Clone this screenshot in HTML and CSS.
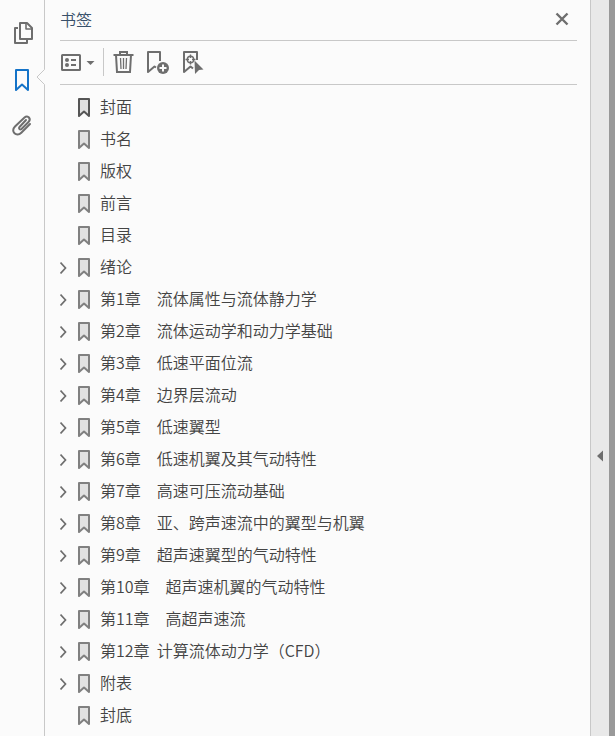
FILE: index.html
```html
<!DOCTYPE html>
<html lang="zh-CN">
<head>
    <meta charset="UTF-8">
    <meta name="viewport" content="width=device-width, initial-scale=1.0">
    <title>书签</title>
    <link rel="stylesheet" href="styles.css">
</head>
<body>

    <!-- shared icons for the bookmark rows -->
    <svg class="defs" width="0" height="0">
        <symbol id="mark" viewBox="0 0 14 22">
            <path d="M2 4H12V21L7 16.500L2 21Z" fill="#e1e1e1" stroke="currentColor" stroke-width="2" stroke-linejoin="round"/>
        </symbol>
        <symbol id="chevron" viewBox="0 0 8 16">
            <path d="M0.500 4.500L5.500 10L0.500 15.500" fill="none" stroke="currentColor" stroke-width="1.700"/>
        </symbol>
    </svg>

    <nav class="rail">
        <button class="rail-btn" aria-label="页面缩略图">
            <svg width="24" height="24" viewBox="0 0 24 24" fill="none" stroke="currentColor" stroke-width="2" stroke-linejoin="round">
                <path d="M8 7H5V22H17V19"/>
                <path d="M10 2H17L22 7V18H10Z"/>
                <path d="M16 2V8H22" stroke-width="1.600"/>
            </svg>
        </button>
        <button class="rail-btn active" aria-label="书签">
            <svg width="24" height="24" viewBox="0 0 24 24" fill="none" stroke="currentColor" stroke-width="2" stroke-linejoin="round">
                <path d="M6 3H18V23L12 17.500L6 23Z"/>
            </svg>
            <svg class="notch" width="9" height="16" viewBox="0 0 9 16">
                <path d="M9 0.500H8.500L1 8L8.500 15.500H9Z" fill="#fbfbfb"/>
                <path d="M8.500 0.500L1 8L8.500 15.500" fill="none" stroke="#c8c8c8"/>
            </svg>
        </button>
        <button class="rail-btn" aria-label="附件">
            <svg width="24" height="24" viewBox="0 0 24 24" fill="none" stroke="currentColor" stroke-width="2" stroke-linecap="round">
                <path d="M16 7L9.500 14C8.200 15.500 10 17.300 11.500 16L18.500 9C21.500 6 18 1.500 14.500 4.500L5 13.500C0 18.500 6.500 24.500 11.300 19.700L20 11"/>
            </svg>
        </button>
    </nav>

    <main class="panel">
        <header class="panel-head">
            <h1>书签</h1>
            <button class="close" aria-label="关闭">
                <svg width="14" height="14" viewBox="0 0 14 14" fill="none" stroke="currentColor" stroke-width="2.400">
                    <path d="M1.500 1.500L12.500 12.500M12.500 1.500L1.500 12.500"/>
                </svg>
            </button>
        </header>

        <div class="toolbar">
            <button class="tool options" aria-label="选项">
                <svg width="36" height="24" viewBox="0 0 36 24">
                    <rect x="2" y="5" width="18" height="15" rx="0.500" fill="none" stroke="currentColor" stroke-width="2"/>
                    <circle cx="7" cy="10" r="2" fill="currentColor"/>
                    <circle cx="7" cy="15" r="2" fill="currentColor"/>
                    <path d="M11 10H16M11 15H16" stroke="currentColor" stroke-width="2"/>
                    <path d="M26.500 11H34.500L30.500 15Z" fill="currentColor"/>
                </svg>
            </button>
            <span class="divider"></span>
            <button class="tool" aria-label="删除">
                <svg width="24" height="24" viewBox="0 0 24 24" fill="none" stroke="currentColor" stroke-width="2">
                    <path d="M1.500 5H21.500M8 5V2H15V5"/>
                    <path d="M4 5L5 22H18L19 5"/>
                    <path d="M8.500 8L9 19M11.500 8V19M14.500 8L14 19" stroke-width="1.300"/>
                </svg>
            </button>
            <button class="tool" aria-label="新建书签">
                <svg width="24" height="24" viewBox="0 0 24 24" fill="none" stroke="currentColor" stroke-width="2" stroke-linejoin="round">
                    <path d="M10 17.500L8.500 16.500L2 22V2H14V11"/>
                    <circle cx="17" cy="18" r="6" fill="currentColor" stroke="none"/>
                    <path d="M17 14.500V21.500M13.500 18H20.500" stroke="#fbfbfb"/>
                </svg>
            </button>
            <button class="tool" aria-label="查找当前书签">
                <svg width="24" height="24" viewBox="0 0 24 24" fill="none" stroke="currentColor" stroke-width="2" stroke-linejoin="round">
                    <path d="M17 10V2H4V22L10.500 16.500L13 18.500"/>
                    <circle cx="10.500" cy="9.500" r="3.200" stroke-width="1.400"/>
                    <path d="M10.500 4.500V8M10.500 11V14.500M5.500 9.500H9M12 9.500H15.500" stroke-width="1.400"/>
                    <path d="M14.500 10.500L23.500 19.500L19 20L15 24Z" fill="currentColor" stroke="none"/>
                </svg>
            </button>
        </div>

        <ul class="tree">
            <li class="current"><a href="#"><svg class="mark"><use href="#mark"/></svg>封面</a></li>
            <li><a href="#"><svg class="mark"><use href="#mark"/></svg>书名</a></li>
            <li><a href="#"><svg class="mark"><use href="#mark"/></svg>版权</a></li>
            <li><a href="#"><svg class="mark"><use href="#mark"/></svg>前言</a></li>
            <li><a href="#"><svg class="mark"><use href="#mark"/></svg>目录</a></li>
            <li><button class="toggle" aria-label="展开"><svg><use href="#chevron"/></svg></button><a href="#"><svg class="mark"><use href="#mark"/></svg>绪论</a></li>
            <li><button class="toggle" aria-label="展开"><svg><use href="#chevron"/></svg></button><a href="#"><svg class="mark"><use href="#mark"/></svg>第1章　流体属性与流体静力学</a></li>
            <li><button class="toggle" aria-label="展开"><svg><use href="#chevron"/></svg></button><a href="#"><svg class="mark"><use href="#mark"/></svg>第2章　流体运动学和动力学基础</a></li>
            <li><button class="toggle" aria-label="展开"><svg><use href="#chevron"/></svg></button><a href="#"><svg class="mark"><use href="#mark"/></svg>第3章　低速平面位流</a></li>
            <li><button class="toggle" aria-label="展开"><svg><use href="#chevron"/></svg></button><a href="#"><svg class="mark"><use href="#mark"/></svg>第4章　边界层流动</a></li>
            <li><button class="toggle" aria-label="展开"><svg><use href="#chevron"/></svg></button><a href="#"><svg class="mark"><use href="#mark"/></svg>第5章　低速翼型</a></li>
            <li><button class="toggle" aria-label="展开"><svg><use href="#chevron"/></svg></button><a href="#"><svg class="mark"><use href="#mark"/></svg>第6章　低速机翼及其气动特性</a></li>
            <li><button class="toggle" aria-label="展开"><svg><use href="#chevron"/></svg></button><a href="#"><svg class="mark"><use href="#mark"/></svg>第7章　高速可压流动基础</a></li>
            <li><button class="toggle" aria-label="展开"><svg><use href="#chevron"/></svg></button><a href="#"><svg class="mark"><use href="#mark"/></svg>第8章　亚、跨声速流中的翼型与机翼</a></li>
            <li><button class="toggle" aria-label="展开"><svg><use href="#chevron"/></svg></button><a href="#"><svg class="mark"><use href="#mark"/></svg>第9章　超声速翼型的气动特性</a></li>
            <li><button class="toggle" aria-label="展开"><svg><use href="#chevron"/></svg></button><a href="#"><svg class="mark"><use href="#mark"/></svg>第10章　超声速机翼的气动特性</a></li>
            <li><button class="toggle" aria-label="展开"><svg><use href="#chevron"/></svg></button><a href="#"><svg class="mark"><use href="#mark"/></svg>第11章　高超声速流</a></li>
            <li><button class="toggle" aria-label="展开"><svg><use href="#chevron"/></svg></button><a href="#"><svg class="mark"><use href="#mark"/></svg>第12章  计算流体动力学（CFD）</a></li>
            <li><button class="toggle" aria-label="展开"><svg><use href="#chevron"/></svg></button><a href="#"><svg class="mark"><use href="#mark"/></svg>附表</a></li>
            <li><a href="#"><svg class="mark"><use href="#mark"/></svg>封底</a></li>
        </ul>
    </main>

    <button class="collapse" aria-label="折叠面板">
        <svg width="6" height="12" viewBox="0 0 6 12"><path d="M6 0.500V11.500L0 6Z" fill="currentColor"/></svg>
    </button>
    <div class="edge"></div>

</body>
</html>
```

FILE: styles.css
```css
*{
    box-sizing: border-box;
}

body{
    display: flex;
    height: 100vh;
    margin: 0;
    overflow: hidden;
    background: #fbfbfb;
    color: #444;
    font-family: "Noto Sans CJK SC", sans-serif;
    font-size: 16px;
    font-weight: 350;
}

button{
    padding: 0;
    border: none;
    background: none;
    color: #6e6e6e;
    cursor: pointer;
}

svg{
    display: block;
}

.defs{
    position: absolute;
}

.rail{
    display: flex;
    flex-direction: column;
    gap: 22px;
    width: 45px;
    padding-top: 21px;
    border-right: 1px solid #c8c8c8;
}

.rail-btn{
    position: relative;
    height: 24px;
    padding-left: 10px;
}

.rail-btn.active{
    color: #1473c8;
}

/* points from the panel edge at the open tab */
.notch{
    position: absolute;
    top: 2px;
    right: -1px;
}

.panel{
    flex: 1;
    padding: 0 13px 0 15px;
    overflow: hidden;
}

.panel-head{
    display: flex;
    align-items: center;
    justify-content: space-between;
    height: 41px;
    padding: 0 8px 2px 0;
    border-bottom: 1px solid #c8c8c8;
}

h1{
    margin: 0;
    color: #38506a;
    font-size: 16px;
    font-weight: 350;
    line-height: 24px;
}

.toolbar{
    display: flex;
    gap: 10px;
    padding: 7px 0 8px;
    border-bottom: 1px solid #c8c8c8;
}

.tool{
    display: flex;
    align-items: center;
    width: 24px;
    height: 28px;
}

.tool.options{
    width: 36px;
}

.divider{
    width: 1px;
    margin: 0 -2px 0 -3px;
    background: #c8c8c8;
}

.tree{
    margin: 0;
    padding: 5px 0 0;
    list-style: none;
}

.tree li{
    display: grid;
    grid-template-columns: 17px 1fr;
    align-items: center;
    height: 32px;
    color: #808080;
}

.tree li.current{
    color: #555;
}

.tree a{
    display: flex;
    grid-column: 2;
    align-items: center;
    gap: 9px;
    color: inherit;
    line-height: 32px;
    text-decoration: none;
    white-space: pre;
    -webkit-text-fill-color: #444;
}

.mark{
    width: 14px;
    height: 22px;
}

.toggle svg{
    width: 8px;
    height: 16px;
}

.collapse{
    display: flex;
    align-items: center;
    justify-content: center;
    width: 19px;
    padding-top: 176px;
    border-left: 1px solid #c8c8c8;
    background: #e9e9e9;
}

.edge{
    width: 6px;
    background: #999;
}
```
